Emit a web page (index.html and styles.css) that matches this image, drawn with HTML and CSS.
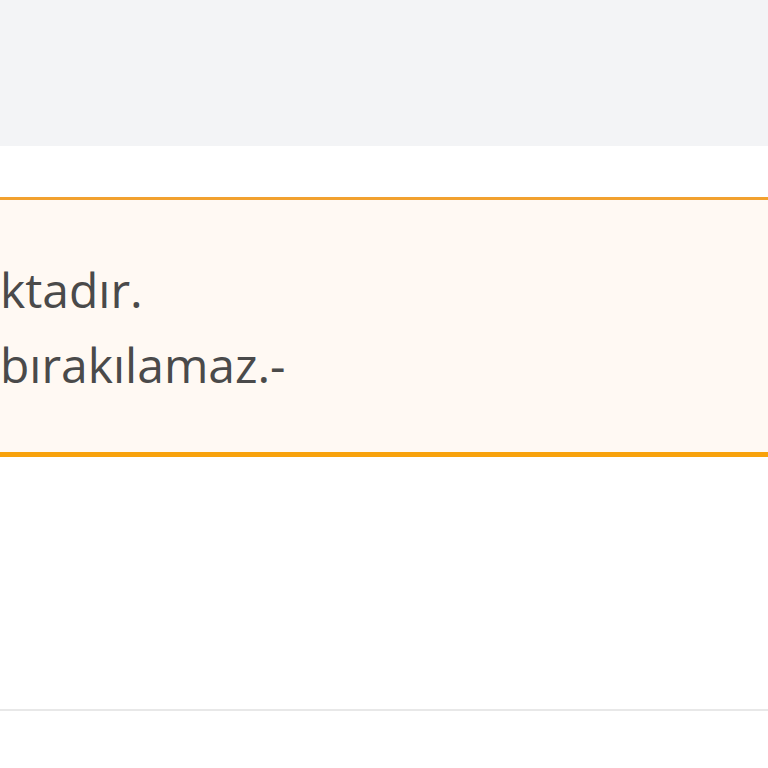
FILE: index.html
```html
<!DOCTYPE html>
<html lang="tr">
<head>
    <meta charset="UTF-8">
    <title>Uyarı</title>
    <link rel="stylesheet" href="styles.css">
</head>
<body>

    <div class="topbar"></div>

    <div class="content">
        <!-- Uyarı kutusu -->
        <div class="notice">
            <p>ktadır.</p>
            <p>bırakılamaz.-</p>
        </div>
    </div>

    <div class="divider"></div>

</body>
</html>
```

FILE: styles.css
```css
body {
    margin: 0;
    font-family: "Open Sans", "Noto Sans", sans-serif;
    background: #fff;
}

.topbar {
    height: 146px;
    background: #f3f4f6;
}

.content {
    padding-top: 51px;
    height: 563px;
    box-sizing: border-box;
}

.notice {
    background: #fff9f3;
    border-top: 3px solid #f2a12e;
    border-bottom: 5px solid #f8a20c;
    padding: 52px 0 50px 0;
}

.notice p {
    margin: 0;
    font-size: 48px;
    line-height: 75px;
    color: #4a4a4a;
}

.divider {
    height: 2px;
    background: #e8e8e8;
}
```
